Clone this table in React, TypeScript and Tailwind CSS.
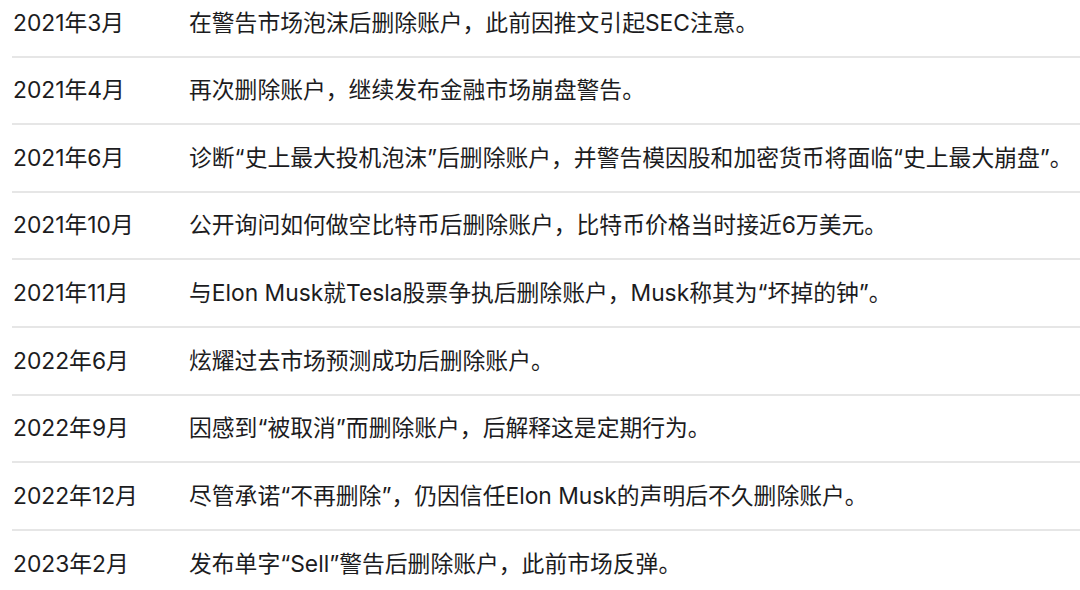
const rows = [
  ['2021年3月', '在警告市场泡沫后删除账户，此前因推文引起SEC注意。'],
  ['2021年4月', '再次删除账户，继续发布金融市场崩盘警告。'],
  ['2021年6月', '诊断“史上最大投机泡沫”后删除账户，并警告模因股和加密货币将面临“史上最大崩盘”。'],
  ['2021年10月', '公开询问如何做空比特币后删除账户，比特币价格当时接近6万美元。'],
  ['2021年11月', '与Elon Musk就Tesla股票争执后删除账户，Musk称其为“坏掉的钟”。'],
  ['2022年6月', '炫耀过去市场预测成功后删除账户。'],
  ['2022年9月', '因感到“被取消”而删除账户，后解释这是定期行为。'],
  ['2022年12月', '尽管承诺“不再删除”，仍因信任Elon Musk的声明后不久删除账户。'],
  ['2023年2月', '发布单字“Sell”警告后删除账户，此前市场反弹。'],
];

export default function App() {
  return (
    <div className="h-[590px] w-[1080px] overflow-hidden bg-white">
      <div className="-mt-[10px] pl-3 font-['Inter','Noto_Sans_CJK_SC',sans-serif] text-[22.8px] text-[#1c1c1e]">
        {rows.map(([date, text], i) => (
          <div
            key={date}
            className={`flex h-[67.6px] items-center ${i < rows.length - 1 ? 'border-b-2 border-[#e6e6e6]' : ''}`}
          >
            <div className="w-[177px] shrink-0 pl-px">{date}</div>
            <div className="min-w-0 whitespace-nowrap">{text}</div>
          </div>
        ))}
      </div>
    </div>
  );
}
